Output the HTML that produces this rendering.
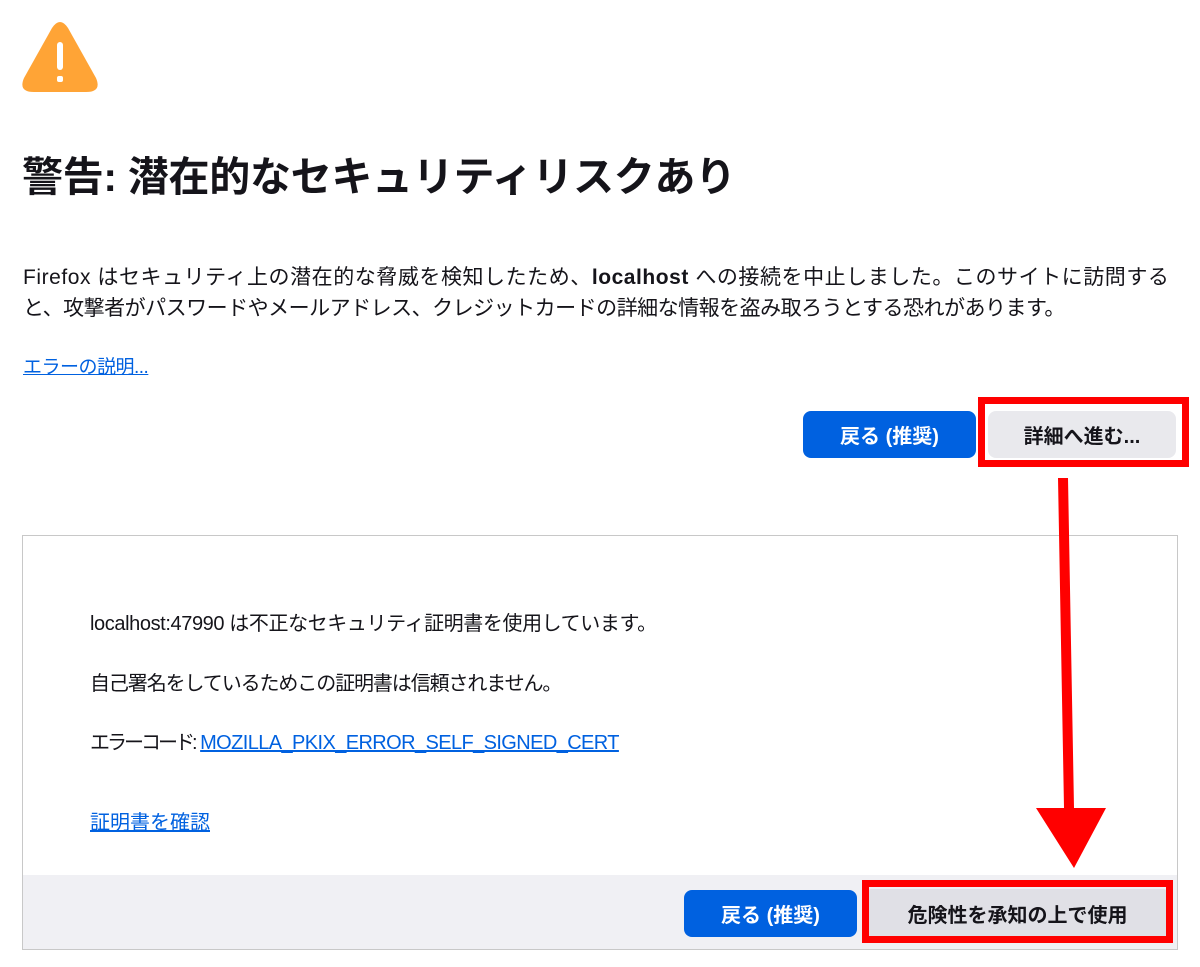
<!DOCTYPE html>
<html><head><meta charset="utf-8"><style>
body{margin:0;width:1200px;height:967px;background:#fff;font-family:"Liberation Sans","Noto Sans CJK JP",sans-serif;color:#15141a;position:relative;overflow:hidden}
.a{position:absolute;white-space:nowrap}
h1{position:absolute;left:22px;top:143px;margin:0;font-size:41px;font-weight:bold;letter-spacing:-0.3px}
.p{left:23px;font-size:21px}
a{color:#0061e0;text-decoration:underline}
.btn{position:absolute;border-radius:8px;font-size:20px;font-weight:bold;display:flex;align-items:center;justify-content:center}
.blue{background:#0061e0;color:#fff}
.grey{background:#e9e9ed;color:#15141a}
.red{position:absolute;border:7px solid #f00;box-sizing:border-box}
.panel{position:absolute;left:22px;top:535px;width:1156px;height:415px;border:1px solid #c8c8c8;box-sizing:border-box}
.foot{position:absolute;left:0;right:0;bottom:0;height:74px;background:#f0f0f4}
.t{left:90px;font-size:20px}
</style></head><body>
<svg class="a" style="left:22px;top:22px" width="76" height="72" viewBox="0 0 76 72"><path d="M30 6 Q38 -6 46 6 L74 56 Q80 70 64 70 L12 70 Q-4 70 2 56 Z" fill="#ffa436"/><rect x="35" y="20" width="6" height="28" rx="3" fill="#fff"/><rect x="35" y="54" width="6" height="6" rx="2" fill="#fff"/></svg>
<h1>警告: 潜在的なセキュリティリスクあり</h1>
<div class="a p" style="top:261px;letter-spacing:0.55px">Firefox はセキュリティ上の潜在的な脅威を検知したため、<b>localhost</b> への接続を中止しました。このサイトに訪問する</div>
<div class="a p" style="top:292px;letter-spacing:-0.5px">と、攻撃者がパスワードやメールアドレス、クレジットカードの詳細な情報を盗み取ろうとする恐れがあります。</div>
<div class="a" style="left:23px;top:352px;font-size:19px;letter-spacing:-0.5px"><a>エラーの説明...</a></div>
<div class="btn blue" style="left:803px;top:411px;width:173px;height:47px">戻る (推奨)</div>
<div class="btn grey" style="left:988px;top:411px;width:188px;height:47px">詳細へ進む...</div>
<div class="red" style="left:978px;top:397px;width:211px;height:70px"></div>
<div class="panel"><div class="foot"></div></div>
<div class="a t" style="top:607px;letter-spacing:-0.4px">localhost:47990 は不正なセキュリティ証明書を使用しています。</div>
<div class="a t" style="top:667px;letter-spacing:-1.1px">自己署名をしているためこの証明書は信頼されません。</div>
<div class="a t" style="top:726px"><span style="letter-spacing:-3px">エラーコード:</span> <a style="letter-spacing:-0.6px">MOZILLA_PKIX_ERROR_SELF_SIGNED_CERT</a></div>
<div class="a t" style="top:806px"><a>証明書を確認</a></div>
<div class="btn blue" style="left:684px;top:890px;width:173px;height:47px">戻る (推奨)</div>
<div class="btn grey" style="left:869px;top:889px;width:297px;height:48px;border-radius:2px;background:#e0e0e6">危険性を承知の上で使用</div>
<div class="red" style="left:862px;top:880px;width:311px;height:63px"></div>
<svg class="a" style="left:1030px;top:478px" width="80" height="392"><polygon points="28,0 38,0 44,330 76,330 44,390 6,330 34,330" fill="#f00"/></svg>
</body></html>
